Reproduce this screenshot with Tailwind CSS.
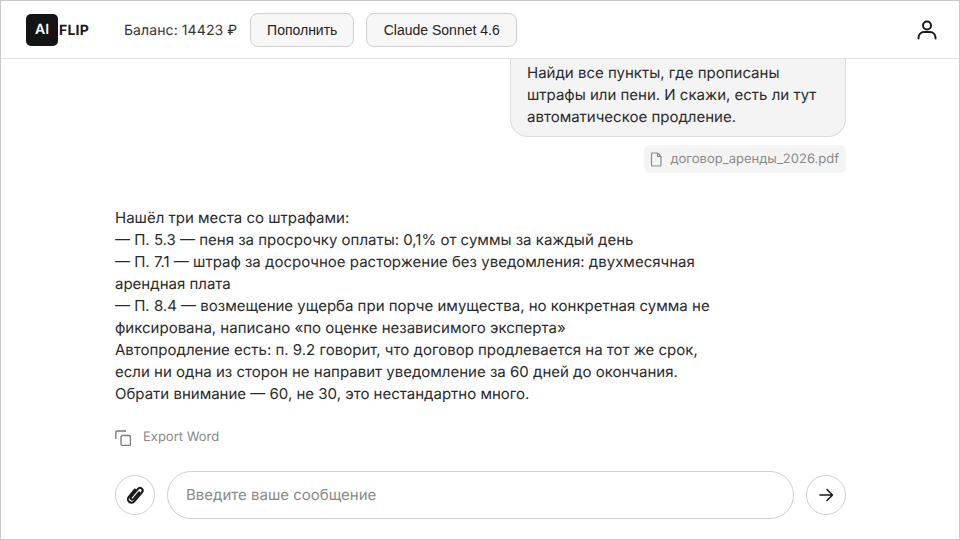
<!DOCTYPE html>
<html lang="ru">
<head>
    <meta charset="UTF-8">
    <title>AI FLIP</title>
    <script src="https://cdn.jsdelivr.net/npm/@tailwindcss/browser@4"></script>
</head>
<body class="bg-white">
    <div class="w-[960px] h-[540px] border border-[#c8c8c8] flex flex-col overflow-hidden font-['Inter',sans-serif] text-[#1f1f1f] antialiased [text-rendering:geometricPrecision]">
        <!-- шапка -->
        <header class="h-[58px] shrink-0 border-b border-[#e2e2e2] flex items-center pl-[25px] pr-[21px] relative z-10 bg-white">
            <div class="w-8 h-8 rounded-[5px] bg-[#141414] text-white flex items-center justify-center text-[14px] font-semibold">AI</div>
            <span class="ml-[1px] pt-[1px] text-[14px] font-bold tracking-[0.2px] text-[#1a1a1a]">FLIP</span>
            <span class="ml-[35px] pt-[1px] text-[14px] tracking-[0.1px] text-[#333]">Баланс: 14423 ₽</span>
            <button class="ml-[13px] h-[34px] w-[104px] pt-[1px] rounded-lg border border-[#cfcfcf] bg-[#f7f7f7] font-['Liberation_Sans',sans-serif] text-[14px] text-[#222]">Пополнить</button>
            <button class="ml-3 h-[34px] w-[151px] pt-[1px] rounded-lg border border-[#cfcfcf] bg-[#f7f7f7] font-['Liberation_Sans',sans-serif] text-[14px] text-[#222]">Claude Sonnet 4.6</button>
            <svg class="ml-auto" width="22" height="22" viewBox="0 0 22 22" fill="none" stroke="#1a1a1a" stroke-width="2" stroke-linecap="round">
                <circle cx="11" cy="6.5" r="4"/>
                <path d="M2.5 19.5v-1a5.5 5.5 0 0 1 5.5-5.5h6a5.5 5.5 0 0 1 5.5 5.5v1"/>
            </svg>
        </header>

        <!-- сообщения -->
        <main class="flex-1 flex flex-col pl-[114px] pr-[113px] min-h-0">
            <div class="self-end w-[336px] h-[79px] -mt-[1px] rounded-b-[18px] border border-t-0 border-[#dcdcdc] bg-[#f4f4f4] px-4 pt-[4px] text-[15px] leading-[22px] text-[#2a2a2a]">
                Найди все пункты, где прописаны штрафы или пени. И скажи, есть ли тут автоматическое продление.
            </div>
            <div class="self-end mt-[8px] h-[28px] pt-[1px] rounded-md bg-[#f4f4f4] flex items-center gap-[7px] pl-[5px] pr-[7px] text-[13px] text-[#8a8a8a]">
                <svg width="14" height="15" viewBox="0 0 14 15" fill="none" stroke="#8a8a8a" stroke-width="1.2" stroke-linejoin="round">
                    <path d="M3.5 1h5l3.5 3.5V13a1 1 0 0 1-1 1H3.5a1 1 0 0 1-1-1V2a1 1 0 0 1 1-1z"/>
                    <path d="M8.5 1v3.5H12"/>
                </svg>
                <span>договор_аренды_2026.pdf</span>
            </div>
            <div class="mt-[34px] w-[610px] text-[15px] leading-[22px] text-[#2a2a2a]">
                <p>Нашёл три места со штрафами:</p>
                <p>— П. 5.3 — пеня за просрочку оплаты: 0,1% от суммы за каждый день</p>
                <p>— П. 7.1 — штраф за досрочное расторжение без уведомления: двухмесячная<br>арендная плата</p>
                <p>— П. 8.4 — возмещение ущерба при порче имущества, но конкретная сумма не<br>фиксирована, написано «по оценке независимого эксперта»</p>
                <p>Автопродление есть: п. 9.2 говорит, что договор продлевается на тот же срок,<br>если ни одна из сторон не направит уведомление за 60 дней до окончания.</p>
                <p>Обрати внимание — 60, не 30, это нестандартно много.</p>
            </div>
            <div class="mt-[23px] flex items-center gap-3 text-[13px] text-[#8a8a8a]">
                <svg width="16" height="16" viewBox="0 0 16 16" fill="none" stroke="#777" stroke-width="1.3" stroke-linejoin="round">
                    <path d="M11 1H2a1.5 1.5 0 0 0-1.2 1.5V9"/>
                    <rect x="6" y="5.5" width="9.5" height="10" rx="1.5"/>
                </svg>
                <span>Export Word</span>
            </div>
            <div class="mt-[23px] flex items-center gap-3">
                <button class="w-10 h-10 rounded-full border border-[#cfcfcf] flex items-center justify-center">
                    <svg width="24" height="24" viewBox="0 0 20 20" fill="none" stroke="#1a1a1a" stroke-width="1.7" stroke-linecap="round" stroke-linejoin="round">
                        <g transform="rotate(40 10 10)">
                            <path d="M7 6.5v8a3 3 0 0 0 6 0v-10a2.2 2.2 0 0 0-4.4 0v9a1.3 1.3 0 0 0 2.6 0V6"/>
                        </g>
                    </svg>
                </button>
                <div class="flex-1 h-12 pt-[1px] rounded-3xl border border-[#cfcfcf] flex items-center px-[18px] text-[15px] text-[#8a8a8a]">Введите ваше сообщение</div>
                <button class="w-10 h-10 rounded-full border border-[#cfcfcf] flex items-center justify-center">
                    <svg width="16" height="16" viewBox="0 0 16 16" fill="none" stroke="#1a1a1a" stroke-width="1.6" stroke-linecap="round" stroke-linejoin="round">
                        <path d="M2 8h12.5M9 2.5 14.5 8 9 13.5"/>
                    </svg>
                </button>
            </div>
        </main>
    </div>
</body>
</html>
